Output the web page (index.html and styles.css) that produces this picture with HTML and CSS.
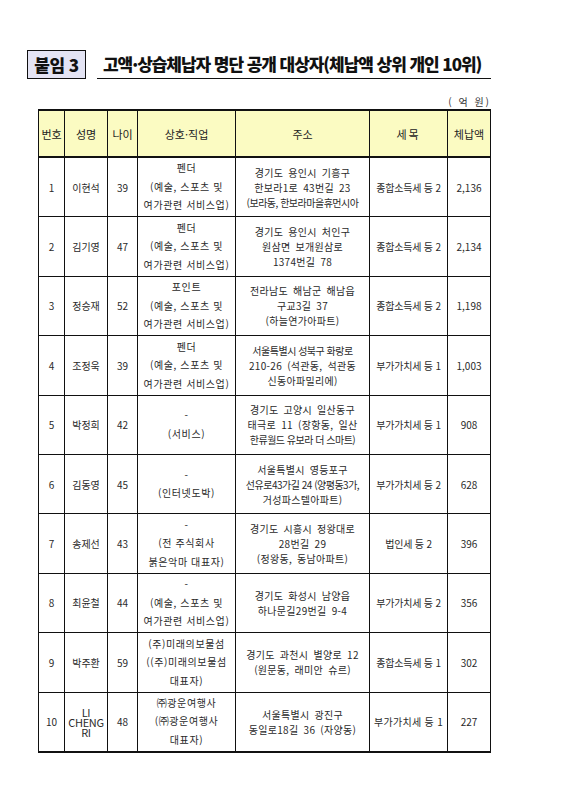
FILE: index.html
```html
<!DOCTYPE html>
<html lang="ko">
<head>
<meta charset="utf-8">
<title>고액·상습체납자 명단 공개 대상자</title>
<link rel="stylesheet" href="styles.css">
</head>
<body>
<div class="page">
  <div class="heading">
    <div class="tag">붙임 3</div>
    <h1 class="title">고액·상습체납자 명단 공개 대상자(체납액 상위 개인 10위)</h1>
  </div>
  <div class="unit">( 억 원)</div>
  <table class="list">
    <colgroup>
      <col class="c-no"><col class="c-name"><col class="c-age"><col class="c-job"><col class="c-addr"><col class="c-tax"><col class="c-amt">
    </colgroup>
    <thead>
      <tr><th>번호</th><th>성명</th><th>나이</th><th>상호·직업</th><th class="h-addr">주소</th><th class="h-tax">세목</th><th>체납액</th></tr>
    </thead>
    <tbody>
      <tr>
        <td>1</td><td>이현석</td><td>39</td>
        <td class="job">펜더<br>(예술, 스포츠 및<br>여가관련 서비스업)</td>
        <td class="addr">경기도 용인시 기흥구<br>한보라1로 43번길 23<br><span class="tight">(보라동, 한보라마을휴먼시아</span></td>
        <td class="tax">종합소득세 등 2</td><td>2,136</td>
      </tr>
      <tr>
        <td>2</td><td>김기영</td><td>47</td>
        <td class="job">펜더<br>(예술, 스포츠 및<br>여가관련 서비스업)</td>
        <td class="addr">경기도 용인시 처인구<br>원삼면 보개원삼로<br>1374번길 78</td>
        <td class="tax">종합소득세 등 2</td><td>2,134</td>
      </tr>
      <tr>
        <td>3</td><td>정승재</td><td>52</td>
        <td class="job">포인트<br>(예술, 스포츠 및<br>여가관련 서비스업)</td>
        <td class="addr">전라남도 해남군 해남읍<br>구교3길 37<br>(하늘연가아파트)</td>
        <td class="tax">종합소득세 등 2</td><td>1,198</td>
      </tr>
      <tr>
        <td>4</td><td>조정욱</td><td>39</td>
        <td class="job">펜더<br>(예술, 스포츠 및<br>여가관련 서비스업)</td>
        <td class="addr"><span class="tight">서울특별시 성북구 화랑로</span><br>210-26 (석관동, 석관동<br>신동아파밀리에)</td>
        <td class="tax">부가가치세 등 1</td><td>1,003</td>
      </tr>
      <tr>
        <td>5</td><td>박정희</td><td>42</td>
        <td class="job">-<br>(서비스)</td>
        <td class="addr">경기도 고양시 일산동구<br>태극로 11 (장항동, 일산<br><span class="tight">한류월드 유보라 더 스마트)</span></td>
        <td class="tax">부가가치세 등 1</td><td>908</td>
      </tr>
      <tr>
        <td>6</td><td>김동영</td><td>45</td>
        <td class="job">-<br>(인터넷도박)</td>
        <td class="addr">서울특별시 영등포구<br><span class="tight">선유로43가길 24 (양평동3가,</span><br>거성파스텔아파트)</td>
        <td class="tax">부가가치세 등 2</td><td>628</td>
      </tr>
      <tr>
        <td>7</td><td>송제선</td><td>43</td>
        <td class="job">-<br>(전 주식회사<br>붉은악마 대표자)</td>
        <td class="addr">경기도 시흥시 정왕대로<br>28번길 29<br>(정왕동, 동남아파트)</td>
        <td class="tax">법인세 등 2</td><td>396</td>
      </tr>
      <tr>
        <td>8</td><td>최윤철</td><td>44</td>
        <td class="job">-<br>(예술, 스포츠 및<br>여가관련 서비스업)</td>
        <td class="addr">경기도 화성시 남양읍<br>하나문길29번길 9-4</td>
        <td class="tax">부가가치세 등 2</td><td>356</td>
      </tr>
      <tr>
        <td>9</td><td>박주환</td><td>59</td>
        <td class="job">(주)미래의보물섬<br>((주)미래의보물섬<br>대표자)</td>
        <td class="addr">경기도 과천시 별양로 12<br>(원문동, 래미안 슈르)</td>
        <td class="tax">종합소득세 등 1</td><td>302</td>
      </tr>
      <tr>
        <td>10</td><td class="latin">LI<br>CHENG<br>RI</td><td>48</td>
        <td class="job">㈜광운여행사<br>(㈜광운여행사<br>대표자)</td>
        <td class="addr">서울특별시 광진구<br>동일로18길 36 (자양동)</td>
        <td class="tax wide">부가가치세 등 1</td><td>227</td>
      </tr>
    </tbody>
  </table>
</div>
</body>
</html>
```

FILE: styles.css
```css
html, body {
  margin: 0;
  padding: 0;
  background: #ffffff;
}

body {
  font-family: "Noto Sans CJK KR", "Noto Sans", sans-serif;
  color: #222222;
}

.page {
  padding: 50px 0 0 27px;
  width: 464px;
}

.heading {
  display: flex;
  align-items: flex-end;
}

.tag {
  box-sizing: border-box;
  width: 59px;
  height: 29px;
  border: 1.5px solid #111111;
  background: #e4e4f4;
  display: flex;
  align-items: center;
  justify-content: center;
  font-size: 17px;
  font-weight: 900;
  letter-spacing: -0.5px;
  color: #111111;
  line-height: 1;
}

.title {
  flex: 1;
  margin: 0 0 0 11px;
  padding: 0 0 2px 6px;
  border-bottom: 1px solid #111111;
  font-size: 17px;
  font-weight: 900;
  line-height: 24px;
  letter-spacing: -1.05px;
  white-space: nowrap;
  color: #111111;
}

.unit {
  margin-top: 16px;
  text-align: right;
  font-size: 10px;
  line-height: 14px;
  letter-spacing: 2px;
  color: #333333;
}

.list {
  margin: 0 0 0 11px;
  width: 452px;
  table-layout: fixed;
  border-collapse: collapse;
  border-top: 2px solid #111111;
  border-bottom: 2px solid #111111;
}

.c-no { width: 26px; }
.c-name { width: 43px; }
.c-age { width: 30px; }
.c-job { width: 98px; }
.c-addr { width: 134px; }
.c-tax { width: 78px; }
.c-amt { width: 43px; }

.list th,
.list td {
  border: 1px solid #111111;
  padding: 0;
  text-align: center;
  vertical-align: middle;
  white-space: nowrap;
  overflow: hidden;
}

.list th {
  height: 45px;
  background: #fbfbc2;
  font-size: 11px;
  font-weight: 400;
  color: #222222;
  border-bottom: 2px solid #111111;
}

.list th.h-tax {
  letter-spacing: 2px;
}

.list td {
  height: 58.4px;
  font-size: 10px;
  line-height: 15px;
  color: #2a2a2a;
}

.list td.job {
  line-height: 18.5px;
  letter-spacing: 0.6px;
}

.list td.addr {
  font-size: 10px;
  line-height: 15px;
  letter-spacing: 0.3px;
  word-spacing: 2px;
}

.list td.addr .tight {
  letter-spacing: -0.5px;
  word-spacing: 0;
}

.list td.tax {
  letter-spacing: -0.2px;
}

.list td.tax.wide {
  letter-spacing: 0.3px;
}

.list td.latin {
  font-size: 11px;
  line-height: 10px;
  letter-spacing: -0.3px;
}
```
